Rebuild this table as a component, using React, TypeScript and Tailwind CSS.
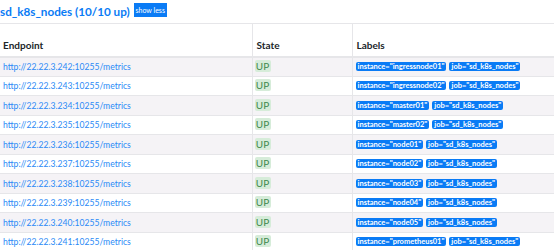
import React from "react";

const targets = [
  { ip: "22.22.3.242", instance: "ingressnode01" },
  { ip: "22.22.3.243", instance: "ingressnode02" },
  { ip: "22.22.3.234", instance: "master01" },
  { ip: "22.22.3.235", instance: "master02" },
  { ip: "22.22.3.236", instance: "node01" },
  { ip: "22.22.3.237", instance: "node02" },
  { ip: "22.22.3.238", instance: "node03" },
  { ip: "22.22.3.239", instance: "node04" },
  { ip: "22.22.3.240", instance: "node05" },
  { ip: "22.22.3.241", instance: "prometheus01" },
];

function Label({ text }: { text: string }) {
  return (
    <span className="inline-flex h-[9px] items-center rounded-[2px] bg-[#0a7bf5] px-[2px] text-[7.5px] font-bold leading-none text-white whitespace-nowrap">
      {text}
    </span>
  );
}

export default function App() {
  return (
    <div className="h-[250px] w-[554px] overflow-hidden bg-white font-['Lato',sans-serif] text-[#212529]">
      <div className="flex h-[23px] items-start gap-[4px] pt-[2px]">
        <h2 className="text-[11.7px] font-bold leading-[18px] text-[#0a7bf5]">
          sd_k8s_nodes (10/10 up)
        </h2>
        <button className="mt-[1px] h-[14px] w-[33px] bg-[#0a7bf5] text-[7px] leading-none text-white">
          show less
        </button>
      </div>
      <table className="w-full border-collapse text-[10px]">
        <thead>
          <tr className="h-[33px] border-t border-[#e6e6e9]">
            <th className="w-[252px] border-b-2 border-[#e6e6e9] px-[3px] pb-[3px] text-left align-bottom font-bold">
              Endpoint
            </th>
            <th className="w-[100px] border-b-2 border-l border-[#e6e6e9] px-[4px] pb-[3px] text-left align-bottom font-bold">
              State
            </th>
            <th className="border-b-2 border-l border-[#e6e6e9] px-[4px] pb-[3px] text-left align-bottom font-bold">
              Labels
            </th>
          </tr>
        </thead>
        <tbody>
          {targets.map((t, i) => (
            <tr
              key={t.ip}
              className={`h-[19.5px] border-b border-[#e6e6e9] ${i % 2 === 0 ? "bg-[#f5f3f6]" : "bg-white"}`}
            >
              <td className="px-[3px] py-0 align-middle">
                <a className="text-[8.6px] text-[#2a8af6]">http://{t.ip}:10255/metrics</a>
              </td>
              <td className="border-l border-[#e6e6e9] px-[2px] py-0 align-middle">
                <span className="inline-flex h-[12px] w-[16px] items-center justify-center rounded-[2px] bg-[#d6ecd9] text-[10px] font-normal leading-none text-[#3f8a4e]">
                  UP
                </span>
              </td>
              <td className="border-l border-[#e6e6e9] px-[3px] py-0 align-middle">
                <div className="flex gap-[3px]">
                  <Label text={`instance="${t.instance}"`} />
                  <Label text={`job="sd_k8s_nodes"`} />
                </div>
              </td>
            </tr>
          ))}
        </tbody>
      </table>
    </div>
  );
}
